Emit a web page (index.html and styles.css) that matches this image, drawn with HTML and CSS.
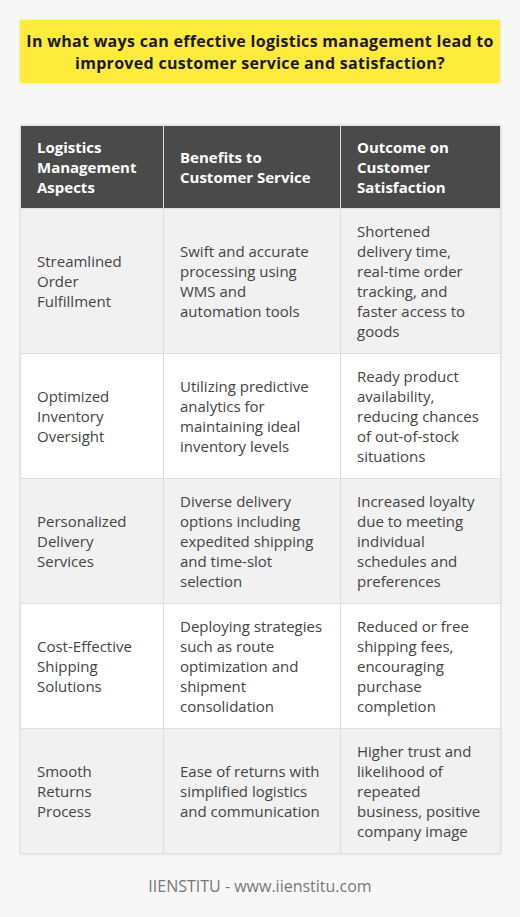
FILE: index.html
```html
<!DOCTYPE html>
<html>
<head>
<meta charset="utf-8">
<link rel="stylesheet" href="styles.css">
</head>
<body>
<div class="page">
  <div class="title">In what ways can effective logistics management lead to improved customer service and satisfaction?</div>
  <table class="grid">
    <thead>
      <tr><th class="c1">Logistics Management Aspects</th><th class="c2">Benefits to Customer Service</th><th class="c3">Outcome on Customer Satisfaction</th></tr>
    </thead>
    <tbody>
      <tr><td>Streamlined Order Fulfillment</td><td>Swift and accurate processing using WMS and automation tools</td><td>Shortened delivery time, real-time order tracking, and faster access to goods</td></tr>
      <tr><td>Optimized Inventory Oversight</td><td>Utilizing predictive analytics for maintaining ideal inventory levels</td><td>Ready product availability, reducing chances of out-of-stock situations</td></tr>
      <tr><td>Personalized Delivery Services</td><td>Diverse delivery options including expedited shipping and time-slot selection</td><td>Increased loyalty due to meeting individual schedules and preferences</td></tr>
      <tr><td>Cost-Effective Shipping Solutions</td><td>Deploying strategies such as route optimization and shipment consolidation</td><td>Reduced or free shipping fees, encouraging purchase completion</td></tr>
      <tr><td>Smooth Returns Process</td><td>Ease of returns with simplified logistics and communication</td><td>Higher trust and likelihood of repeated business, positive company image</td></tr>
    </tbody>
  </table>
  <div class="footer">IIENSTITU - www.iienstitu.com</div>
</div>
</body>
</html>
```
FILE: styles.css
```css
html, body {
  margin: 0;
  padding: 0;
  background: #f7f7f7;
}
.page {
  padding: 20px 20px 0;
  font-family: "Open Sans", "Liberation Sans", sans-serif;
  color: #444;
}
.title {
  background: #ffeb3b;
  color: #1a1a1a;
  font-weight: 700;
  font-size: 16px;
  letter-spacing: 0.3px;
  line-height: 22px;
  text-align: center;
  padding: 9.5px 6px;
  box-shadow: 0 0 3px rgba(0,0,0,0.12);
}
.grid {
  margin-top: 42px;
  width: 480px;
  border-collapse: collapse;
  table-layout: fixed;
  box-shadow: 0 0 3px rgba(0,0,0,0.12);
  font-size: 15px;
  line-height: 20px;
}
.grid th, .grid td {
  box-sizing: border-box;
  border: 1px solid #dedede;
  padding: 12px 16px;
  text-align: left;
  vertical-align: middle;
}
.c1 { width: 143px; }
.c2 { width: 177px; }
.c3 { width: 160px; }
.grid th {
  background: #4a4a4a;
  color: #fff;
  font-weight: 700;
  padding-top: 11px;
  padding-bottom: 11px;
}
.grid td {
  color: #444;
}
.grid tbody tr:nth-child(odd) td { background: #f1f1f1; }
.grid tbody tr:nth-child(even) td { background: #fff; }
.footer {
  text-align: center;
  color: #777;
  font-size: 16px;
  line-height: 22px;
  margin-top: 21px;
}
```
